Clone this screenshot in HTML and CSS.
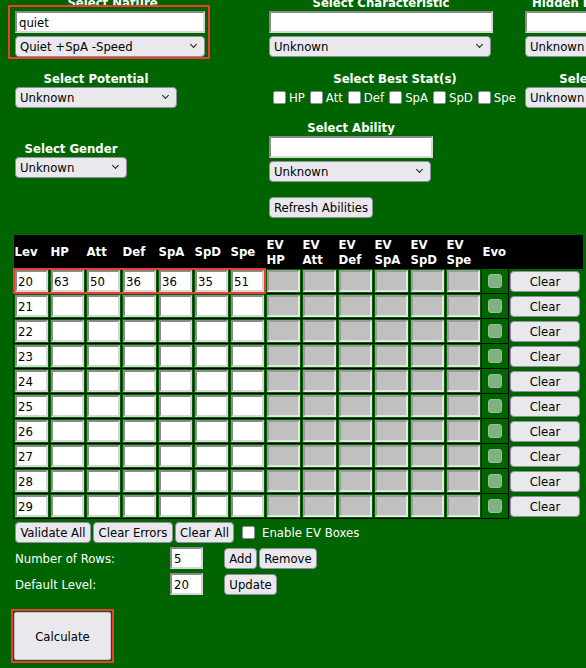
FILE: index.html
```html
<!DOCTYPE html>
<html>
<head>
<meta charset="utf-8">
<link rel="stylesheet" href="styles.css">
</head>
<body>
<div class="page">
  <div class="top">
    <div class="cell">
      <div class="lbl">Select Nature</div>
      <div class="hl-box">
        <input class="txt w190" value="quiet">
        <span class="sel"><select class="w190"><option>Quiet +SpA -Speed</option></select></span>
      </div>
    </div>
    <div class="cell">
      <div class="lbl">Select Characteristic</div>
      <input class="txt w224" value="">
      <span class="sel"><select class="w222"><option>Unknown</option></select></span>
    </div>
    <div class="cell col3a">
      <div class="lbl">Hidden Power</div>
      <input class="txt w160" value="">
      <span class="sel"><select class="w160"><option>Unknown</option></select></span>
    </div>

    <div class="cell">
      <div class="lbl">Select Potential</div>
      <span class="sel"><select class="w162"><option>Unknown</option></select></span>
    </div>
    <div class="cell">
      <div class="lbl">Select Best Stat(s)</div>
      <div class="best">
        <label><input type="checkbox" class="cb">HP</label>
        <label><input type="checkbox" class="cb">Att</label>
        <label><input type="checkbox" class="cb">Def</label>
        <label><input type="checkbox" class="cb">SpA</label>
        <label><input type="checkbox" class="cb">SpD</label>
        <label><input type="checkbox" class="cb">Spe</label>
      </div>
    </div>
    <div class="cell col3b">
      <div class="lbl">Select Type</div>
      <span class="sel"><select class="w160"><option>Unknown</option></select></span>
    </div>

    <div class="cell gender">
      <div class="lbl">Select Gender</div>
      <span class="sel"><select class="w112"><option>Unknown</option></select></span>
    </div>
    <div class="cell">
      <div class="lbl">Select Ability</div>
      <input class="txt w164" value="">
      <span class="sel"><select class="w162"><option>Unknown</option></select></span>
      <button class="btn refresh">Refresh Abilities</button>
    </div>
    <div></div>
  </div>

  <table class="stats">
    <thead>
      <tr>
        <th>Lev</th><th>HP</th><th>Att</th><th>Def</th><th>SpA</th><th>SpD</th><th>Spe</th>
        <th>EV<br>HP</th><th>EV<br>Att</th><th>EV<br>Def</th><th>EV<br>SpA</th><th>EV<br>SpD</th><th>EV<br>Spe</th>
        <th>Evo</th><th class="th-clear"></th>
      </tr>
    </thead>
    <tbody>
      <tr>
        <td class="mark"><input class="iv" value="20"><div class="row-hl"></div></td>
        <td><input class="iv" value="63"></td><td><input class="iv" value="50"></td><td><input class="iv" value="36"></td>
        <td><input class="iv" value="36"></td><td><input class="iv" value="35"></td><td><input class="iv" value="51"></td>
        <td><input class="iv ev" disabled></td><td><input class="iv ev" disabled></td><td><input class="iv ev" disabled></td>
        <td><input class="iv ev" disabled></td><td><input class="iv ev" disabled></td><td><input class="iv ev" disabled></td>
        <td class="evo"><span class="evo-box"></span></td><td class="clr"><button class="btn clear">Clear</button></td>
      </tr>
      <tr>
        <td><input class="iv" value="21"></td>
        <td><input class="iv"></td><td><input class="iv"></td><td><input class="iv"></td><td><input class="iv"></td><td><input class="iv"></td><td><input class="iv"></td>
        <td><input class="iv ev" disabled></td><td><input class="iv ev" disabled></td><td><input class="iv ev" disabled></td>
        <td><input class="iv ev" disabled></td><td><input class="iv ev" disabled></td><td><input class="iv ev" disabled></td>
        <td class="evo"><span class="evo-box"></span></td><td class="clr"><button class="btn clear">Clear</button></td>
      </tr>
      <tr>
        <td><input class="iv" value="22"></td>
        <td><input class="iv"></td><td><input class="iv"></td><td><input class="iv"></td><td><input class="iv"></td><td><input class="iv"></td><td><input class="iv"></td>
        <td><input class="iv ev" disabled></td><td><input class="iv ev" disabled></td><td><input class="iv ev" disabled></td>
        <td><input class="iv ev" disabled></td><td><input class="iv ev" disabled></td><td><input class="iv ev" disabled></td>
        <td class="evo"><span class="evo-box"></span></td><td class="clr"><button class="btn clear">Clear</button></td>
      </tr>
      <tr>
        <td><input class="iv" value="23"></td>
        <td><input class="iv"></td><td><input class="iv"></td><td><input class="iv"></td><td><input class="iv"></td><td><input class="iv"></td><td><input class="iv"></td>
        <td><input class="iv ev" disabled></td><td><input class="iv ev" disabled></td><td><input class="iv ev" disabled></td>
        <td><input class="iv ev" disabled></td><td><input class="iv ev" disabled></td><td><input class="iv ev" disabled></td>
        <td class="evo"><span class="evo-box"></span></td><td class="clr"><button class="btn clear">Clear</button></td>
      </tr>
      <tr>
        <td><input class="iv" value="24"></td>
        <td><input class="iv"></td><td><input class="iv"></td><td><input class="iv"></td><td><input class="iv"></td><td><input class="iv"></td><td><input class="iv"></td>
        <td><input class="iv ev" disabled></td><td><input class="iv ev" disabled></td><td><input class="iv ev" disabled></td>
        <td><input class="iv ev" disabled></td><td><input class="iv ev" disabled></td><td><input class="iv ev" disabled></td>
        <td class="evo"><span class="evo-box"></span></td><td class="clr"><button class="btn clear">Clear</button></td>
      </tr>
      <tr>
        <td><input class="iv" value="25"></td>
        <td><input class="iv"></td><td><input class="iv"></td><td><input class="iv"></td><td><input class="iv"></td><td><input class="iv"></td><td><input class="iv"></td>
        <td><input class="iv ev" disabled></td><td><input class="iv ev" disabled></td><td><input class="iv ev" disabled></td>
        <td><input class="iv ev" disabled></td><td><input class="iv ev" disabled></td><td><input class="iv ev" disabled></td>
        <td class="evo"><span class="evo-box"></span></td><td class="clr"><button class="btn clear">Clear</button></td>
      </tr>
      <tr>
        <td><input class="iv" value="26"></td>
        <td><input class="iv"></td><td><input class="iv"></td><td><input class="iv"></td><td><input class="iv"></td><td><input class="iv"></td><td><input class="iv"></td>
        <td><input class="iv ev" disabled></td><td><input class="iv ev" disabled></td><td><input class="iv ev" disabled></td>
        <td><input class="iv ev" disabled></td><td><input class="iv ev" disabled></td><td><input class="iv ev" disabled></td>
        <td class="evo"><span class="evo-box"></span></td><td class="clr"><button class="btn clear">Clear</button></td>
      </tr>
      <tr>
        <td><input class="iv" value="27"></td>
        <td><input class="iv"></td><td><input class="iv"></td><td><input class="iv"></td><td><input class="iv"></td><td><input class="iv"></td><td><input class="iv"></td>
        <td><input class="iv ev" disabled></td><td><input class="iv ev" disabled></td><td><input class="iv ev" disabled></td>
        <td><input class="iv ev" disabled></td><td><input class="iv ev" disabled></td><td><input class="iv ev" disabled></td>
        <td class="evo"><span class="evo-box"></span></td><td class="clr"><button class="btn clear">Clear</button></td>
      </tr>
      <tr>
        <td><input class="iv" value="28"></td>
        <td><input class="iv"></td><td><input class="iv"></td><td><input class="iv"></td><td><input class="iv"></td><td><input class="iv"></td><td><input class="iv"></td>
        <td><input class="iv ev" disabled></td><td><input class="iv ev" disabled></td><td><input class="iv ev" disabled></td>
        <td><input class="iv ev" disabled></td><td><input class="iv ev" disabled></td><td><input class="iv ev" disabled></td>
        <td class="evo"><span class="evo-box"></span></td><td class="clr"><button class="btn clear">Clear</button></td>
      </tr>
      <tr>
        <td><input class="iv" value="29"></td>
        <td><input class="iv"></td><td><input class="iv"></td><td><input class="iv"></td><td><input class="iv"></td><td><input class="iv"></td><td><input class="iv"></td>
        <td><input class="iv ev" disabled></td><td><input class="iv ev" disabled></td><td><input class="iv ev" disabled></td>
        <td><input class="iv ev" disabled></td><td><input class="iv ev" disabled></td><td><input class="iv ev" disabled></td>
        <td class="evo"><span class="evo-box"></span></td><td class="clr"><button class="btn clear">Clear</button></td>
      </tr>
    </tbody>
  </table>

  <div class="actions">
    <button class="btn bw76">Validate All</button>
    <button class="btn bw80">Clear Errors</button>
    <button class="btn bw59">Clear All</button>
    <label class="ev-toggle"><input type="checkbox" class="cb">Enable EV Boxes</label>
  </div>

  <div class="form">
    <span>Number of Rows:</span>
    <input class="txt small" value="5">
    <span class="btns"><button class="btn bw33">Add</button><button class="btn bw58">Remove</button></span>
    <span>Default Level:</span>
    <input class="txt small" value="20">
    <span class="btns"><button class="btn bw53">Update</button></span>
  </div>

  <div class="calc-wrap"><button class="calc">Calculate</button></div>
</div>
</body>
</html>
```

FILE: styles.css
```css
html, body {
  margin: 0;
  padding: 0;
}
body {
  background: #006400;
  color: #ffffff;
  font-family: "DejaVu Sans Condensed", "DejaVu Sans", Verdana, sans-serif;
  font-size: 13px;
  line-height: 15px;
  width: 586px;
  height: 668px;
  overflow: hidden;
}
.page {
  padding-left: 15px;
  margin-top: -5px;
}

/* top selectors */
.top {
  display: grid;
  grid-template-columns: 254px 256px 1fr;
  row-gap: 12px;
  align-items: start;
}
.cell {
  display: flex;
  flex-direction: column;
  align-items: flex-start;
  width: max-content;
}
.lbl {
  align-self: stretch;
  text-align: center;
  font-weight: bold;
  white-space: nowrap;
  height: 15px;
  margin-bottom: 1px;
}
.hl-box {
  display: flex;
  flex-direction: column;
  margin: -6px 0 0 -7px;
  border: 2px solid #ef3b33;
  padding: 4px 3px 0 5px;
}
.col3a { width: 106px; }
.col3b { width: 144px; }
.gender { margin-top: 21px; }
.gender .lbl { margin-bottom: 1px; }

.txt {
  box-sizing: border-box;
  height: 22px;
  margin: 0 0 3px 0;
  padding: 0 2px;
  background: #fff;
  color: #000;
  font: inherit;
  border-style: solid;
  border-width: 2px;
  border-color: #8a8a8a #d6d6d6 #d6d6d6 #8a8a8a;
  outline: none;
}
.w190 { width: 190px; }
.w224 { width: 224px; }
.w222 { width: 222px; }
.w160 { width: 160px; }
.w162 { width: 162px; }
.w164 { width: 164px; }
.w112 { width: 112px; }

.sel {
  position: relative;
  display: block;
  height: 21px;
}
.sel select {
  appearance: none;
  -webkit-appearance: none;
  box-sizing: border-box;
  height: 21px;
  margin: 0;
  padding: 0 20px 0 4px;
  border: 1px solid #8f8f9d;
  border-radius: 4px;
  background: #e9e9ed;
  color: #000;
  font: inherit;
  outline: none;
}
.sel::after {
  content: "";
  position: absolute;
  right: 9px;
  top: 6px;
  width: 4px;
  height: 4px;
  border-right: 1.5px solid #1a1a1a;
  border-bottom: 1.5px solid #1a1a1a;
  transform: rotate(45deg);
  pointer-events: none;
}

.best {
  display: flex;
  align-items: center;
  height: 21px;
  padding-left: 4px;
}
.best label {
  display: flex;
  align-items: center;
  margin-right: 5px;
}
.cb {
  appearance: none;
  -webkit-appearance: none;
  box-sizing: border-box;
  width: 13px;
  height: 13px;
  margin: 0 3px 0 0;
  background: #fff;
  border: 1px solid #8f8f9d;
  border-radius: 2px;
}

.btn {
  box-sizing: border-box;
  height: 21px;
  margin: 0;
  padding: 0 4px;
  background: #e9e9ed;
  border: 1px solid #8f8f9d;
  border-radius: 4px;
  color: #000;
  font: inherit;
  line-height: 15px;
  text-align: center;
  white-space: nowrap;
}
.bw76 { width: 76px; padding: 0; }
.bw80 { width: 80px; padding: 0; }
.bw59 { width: 59px; padding: 0; }
.bw33 { width: 33px; padding: 0; }
.bw58 { width: 58px; padding: 0; }
.bw53 { width: 53px; padding: 0; }
.refresh {
  margin-top: 15px;
}

/* stats table */
.stats {
  border-collapse: collapse;
  margin: 17px 0 0 -2px;
}
.stats th {
  background: #000;
  color: #fff;
  font-weight: bold;
  text-align: left;
  vertical-align: middle;
  padding: 0 1px;
  height: 33px;
  line-height: 15px;
}
.stats td {
  border: 1px solid #000;
  padding: 1px;
  vertical-align: middle;
}
.stats td.clr {
  border: none;
  padding: 0 2px 0 1px;
}
.stats td.mark {
  position: relative;
}
.row-hl {
  position: absolute;
  left: -1px;
  top: -1px;
  width: 253px;
  height: 26px;
  box-sizing: border-box;
  border: 2px solid #ef3b33;
  pointer-events: none;
}
.iv {
  display: block;
  box-sizing: border-box;
  width: 33px;
  height: 22px;
  margin: 0;
  padding: 0 1px;
  background: #fff;
  color: #000;
  font: inherit;
  border-style: solid;
  border-width: 2px;
  border-color: #8a8a8a #d6d6d6 #d6d6d6 #8a8a8a;
  outline: none;
}
.iv.ev {
  background: #c0c0c0;
  border-color: #9a9a9a #e4e4e4 #e4e4e4 #9a9a9a;
}
.evo {
  width: 24px;
}
.evo-box {
  display: block;
  box-sizing: border-box;
  width: 14px;
  height: 14px;
  margin: 0 auto;
  background: #7fb27f;
  border: 1px solid #96c096;
  border-radius: 3px;
}
.clear {
  display: block;
  width: 70px;
}

/* bottom */
.actions {
  display: flex;
  align-items: center;
  gap: 2px;
  margin-top: 3px;
  height: 21px;
}
.ev-toggle {
  display: flex;
  align-items: center;
  margin-left: 6px;
}
.ev-toggle .cb {
  margin-right: 7px;
}
.form {
  display: grid;
  grid-template-columns: 155px 33px auto;
  row-gap: 4px;
  align-items: center;
  margin-top: 4px;
}
.txt.small {
  width: 33px;
  margin: 0;
}
.btns {
  display: flex;
  gap: 2px;
  margin-left: 21px;
}
.calc-wrap {
  display: inline-block;
  margin: 14px 0 0 -4px;
  border: 2px solid #ef3b33;
  padding: 1px;
}
.calc {
  display: block;
  width: 97px;
  height: 48px;
  margin: 0;
  background: #e9e9ed;
  border: 1px solid #c2c2c8;
  border-radius: 2px;
  color: #000;
  font: inherit;
}
```
